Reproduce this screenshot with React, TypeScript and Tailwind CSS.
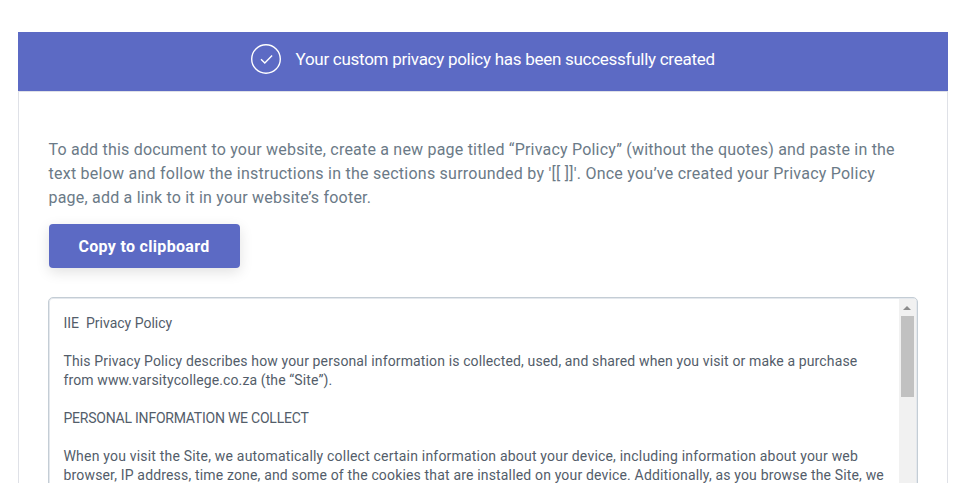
import type { ReactNode } from 'react';

const intro: [string, string][] = [
  ['To add this document to your website, create a new page titled “Privacy Policy” (without the quotes) and paste in the', 'tracking-[0.204px]'],
  ["text below and follow the instructions in the sections surrounded by '[[ ]]'. Once you’ve created your Privacy Policy", 'tracking-[0.243px]'],
  ['page, add a link to it in your website’s footer.', 'tracking-[0.21px]'],
];

const policy: [string, string][] = [
  ['IIE  Privacy Policy', 'tracking-[0px]'],
  ['', ''],
  ['This Privacy Policy describes how your personal information is collected, used, and shared when you visit or make a purchase', 'tracking-[0.132px]'],
  ['from www.varsitycollege.co.za (the “Site”).', 'tracking-[0.11px]'],
  ['', ''],
  ['PERSONAL INFORMATION WE COLLECT', 'tracking-[-0.23px]'],
  ['', ''],
  ['When you visit the Site, we automatically collect certain information about your device, including information about your web', 'tracking-[0.196px]'],
  ['browser, IP address, time zone, and some of the cookies that are installed on your device. Additionally, as you browse the Site, we', 'tracking-[0.165px]'],
];

function Line({ className, children }: { className: string; children: ReactNode }) {
  return <span className={`block whitespace-pre ${className}`}>{children}</span>;
}

function CheckIcon() {
  return (
    <svg width="32" height="32" viewBox="0 0 32 32" fill="none" stroke="#fff" className="shrink-0">
      <circle cx="16" cy="16" r="14.3" strokeWidth="1.4" />
      <path d="M11 16.2l3.8 3.8 7.3-7.4" strokeWidth="1.4" />
    </svg>
  );
}

export default function App() {
  return (
    <div className="h-[483px] overflow-hidden bg-white pt-8 pl-[18px] font-['Roboto','Liberation_Sans',sans-serif]">
      <main className="w-[930px]">
        <header className="flex h-[59px] items-start bg-[#5c6ac4] pt-[11px] pl-[232px] text-white">
          <CheckIcon />
          <h1 className="ml-[13.5px] whitespace-pre pt-1 text-[17px] leading-6 tracking-[-0.275px]">
            Your custom privacy policy has been successfully created
          </h1>
        </header>
        <section className="h-[400px] border-x border-t border-[#dfe1e7] pt-[46px] pl-[30px]">
          <p className="-ml-[0.5px] text-base leading-6 text-[#6b7a87]">
            {intro.map(([text, tracking]) => (
              <Line key={text} className={tracking}>{text}</Line>
            ))}
          </p>
          <button className="mt-[14px] flex h-11 w-[191px] items-center justify-center rounded-[4px] bg-[#5c6ac4] pt-px pr-px text-base font-bold text-white shadow-[0_4px_14px_rgba(0,0,0,0.12)]">
            <span className="tracking-[0.32px]">Copy to clipboard</span>
          </button>
          <div className="mt-[29px] -ml-px flex h-[240px] w-[870px] overflow-hidden rounded-t-[5px] border border-[#c4cdd5] pr-px shadow-[inset_0_0_0_1px_#e4e8ed]">
            <div className="w-[850px] shrink-0 pt-4 pl-[14.5px] text-sm leading-[19px] text-[#535d6a]">
              {policy.map(([text, tracking], i) => (
                <Line key={i} className={`h-[19px] ${tracking}`}>{text}</Line>
              ))}
            </div>
            <div className="mt-px flex flex-1 flex-col items-center bg-[#f1f1f1] pr-px">
              <svg width="8" height="4" viewBox="0 0 8 4" className="mt-[7px]">
                <path d="M0 4L4 0L8 4Z" fill="#8c8c8c" />
              </svg>
              <div className="mt-[6px] h-[81px] w-[13px] bg-[#c1c1c1]" />
            </div>
          </div>
        </section>
      </main>
    </div>
  );
}
